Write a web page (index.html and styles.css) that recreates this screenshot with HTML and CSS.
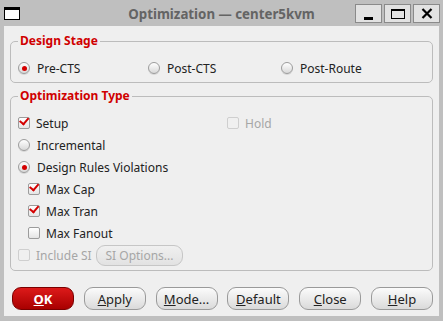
FILE: index.html
```html
<!DOCTYPE html>
<html>
<head>
  <title>Optimization — center5kvm</title>
  <link rel="stylesheet" href="styles.css">
</head>
<body>
  <div class="window">
    <div class="titlebar">
      <div class="tb-left"><span class="app-icon"></span></div>
      <div class="title">Optimization — center5kvm</div>
      <div class="tb-right">
        <span class="wbtn"><span class="ico-min"></span></span>
        <span class="wbtn"><span class="ico-max"></span></span>
        <span class="wbtn">
          <svg width="12" height="11" viewBox="0 0 12 11"><path d="M1.5 1 L10.5 10 M10.5 1 L1.5 10" stroke="#000" stroke-width="2.2"/></svg>
        </span>
      </div>
    </div>

    <div class="content">
      <fieldset class="group">
        <legend>Design Stage</legend>
        <div class="row stage-row">
          <label class="opt col-a"><span class="radio on"></span>Pre-CTS</label>
          <label class="opt col-b"><span class="radio"></span>Post-CTS</label>
          <label class="opt"><span class="radio"></span>Post-Route</label>
        </div>
      </fieldset>

      <fieldset class="group group-opt">
        <legend>Optimization Type</legend>
        <div class="row">
          <label class="opt setup-col"><span class="check on"></span>Setup</label>
          <label class="opt disabled"><span class="check"></span>Hold</label>
        </div>
        <div class="row">
          <label class="opt"><span class="radio"></span>Incremental</label>
        </div>
        <div class="row">
          <label class="opt"><span class="radio on"></span>Design Rules Violations</label>
        </div>
        <div class="row sub">
          <label class="opt"><span class="check on"></span>Max Cap</label>
        </div>
        <div class="row sub">
          <label class="opt"><span class="check on"></span>Max Tran</label>
        </div>
        <div class="row sub">
          <label class="opt"><span class="check"></span>Max Fanout</label>
        </div>
        <div class="row">
          <label class="opt disabled si-col"><span class="check"></span>Include SI</label>
          <button class="btn si-btn" disabled>SI Options...</button>
        </div>
      </fieldset>

      <div class="actions">
        <button class="btn ok"><u>O</u>K</button>
        <button class="btn"><u>A</u>pply</button>
        <button class="btn"><u>M</u>ode...</button>
        <button class="btn"><u>D</u>efault</button>
        <button class="btn"><u>C</u>lose</button>
        <button class="btn"><u>H</u>elp</button>
      </div>
    </div>
  </div>
</body>
</html>
```

FILE: styles.css
```css
body {
  margin: 0;
  background: #bfbfbf;
  font-family: "Noto Sans", "Open Sans", sans-serif;
  font-size: 12px;
  color: #222;
}
.window {
  width: 443px;
  height: 321px;
  background: #bfbfbf;
}
.titlebar {
  height: 26px;
  display: grid;
  grid-template-columns: 1fr auto 1fr;
  align-items: center;
}
.tb-left {
  padding-left: 4px;
  display: flex;
}
.app-icon {
  width: 14px;
  height: 9px;
  background: #fff;
  border: 1px solid #000;
  border-top: 3px solid #000;
}
.title {
  font-weight: bold;
  font-size: 13.3px;
  color: #646464;
  padding-top: 1px;
}
.tb-right {
  display: flex;
  justify-content: flex-end;
  gap: 2px;
  padding-right: 3px;
  padding-top: 1px;
}
.wbtn {
  width: 25px;
  height: 17px;
  background: #e2e2e2;
  border: 1px solid #8a8a8a;
  display: flex;
  align-items: center;
  justify-content: center;
}
.ico-min {
  width: 9px;
  height: 3px;
  background: #000;
  margin-top: 9px;
}
.ico-max {
  width: 12px;
  height: 7px;
  border: 1px solid #000;
  border-top: 2px solid #000;
}

.content {
  margin: 0 4px;
  height: 290px;
  background: #efefef;
  padding: 7px 6px 0 6px;
  box-sizing: border-box;
}
.group {
  margin: 0;
  border: 1px solid #bcbcbc;
  border-radius: 5px;
  padding: 0 0 3px 7px;
}
.group legend {
  color: #d00000;
  font-weight: bold;
  font-size: 12px;
  line-height: 16px;
  padding: 0 2px;
}
.group-opt {
  margin-top: 5px;
  padding-bottom: 4px;
}
.row {
  height: 22px;
  display: flex;
  align-items: center;
}
.stage-row {
  margin-top: 8px;
}
.group-opt .row:first-of-type {
  margin-top: 8px;
}
.col-a {
  width: 130px;
}
.col-b {
  width: 133px;
}
.setup-col {
  width: 209px;
}
.si-col {
  width: 78px;
}
.sub {
  padding-left: 10px;
}
.opt {
  display: flex;
  align-items: center;
}
.opt.disabled {
  color: #a6a6a6;
}
.radio {
  width: 10px;
  height: 10px;
  border: 1px solid #9c9c9c;
  border-radius: 50%;
  background: linear-gradient(#ffffff, #d8d8d8);
  margin-right: 7px;
  display: flex;
  align-items: center;
  justify-content: center;
  box-shadow: 0 1px 0 rgba(0,0,0,0.1);
}
.radio.on::after {
  content: "";
  width: 5px;
  height: 5px;
  border-radius: 50%;
  background: #d40000;
}
.check {
  width: 10px;
  height: 10px;
  border: 1px solid #9c9c9c;
  border-radius: 2px;
  background: linear-gradient(#ffffff, #e4e4e4);
  margin-right: 6px;
  position: relative;
}
.disabled .check {
  border-color: #cfcfcf;
  background: #f0f0f0;
}
.check.on::after {
  content: "";
  position: absolute;
  left: 2px;
  top: 0px;
  width: 7px;
  height: 4px;
  border-left: 2.5px solid #d40000;
  border-bottom: 2.5px solid #d40000;
  transform: rotate(-50deg);
  transform-origin: 3px 4px;
}

.btn {
  font-family: "Noto Sans", "Open Sans", sans-serif;
  font-size: 13px;
  color: #222;
  height: 23px;
  width: 62px;
  padding: 0;
  border: 1px solid #9a9a9a;
  border-radius: 9px;
  background: linear-gradient(#fbfbfb, #dadada);
}
.btn:disabled {
  font-size: 12px;
  color: #a6a6a6;
  border-color: #c6c6c6;
  background: linear-gradient(#f0f0f0, #e2e2e2);
}
.si-btn {
  width: 87px;
  height: 21px;
}
.actions {
  display: flex;
  justify-content: space-between;
  margin: 16px 0 0 2px;
}
.btn.ok {
  color: #fff;
  font-weight: bold;
  border-color: #7a0000;
  background: linear-gradient(#dd1a1a, #a80000);
}
```
